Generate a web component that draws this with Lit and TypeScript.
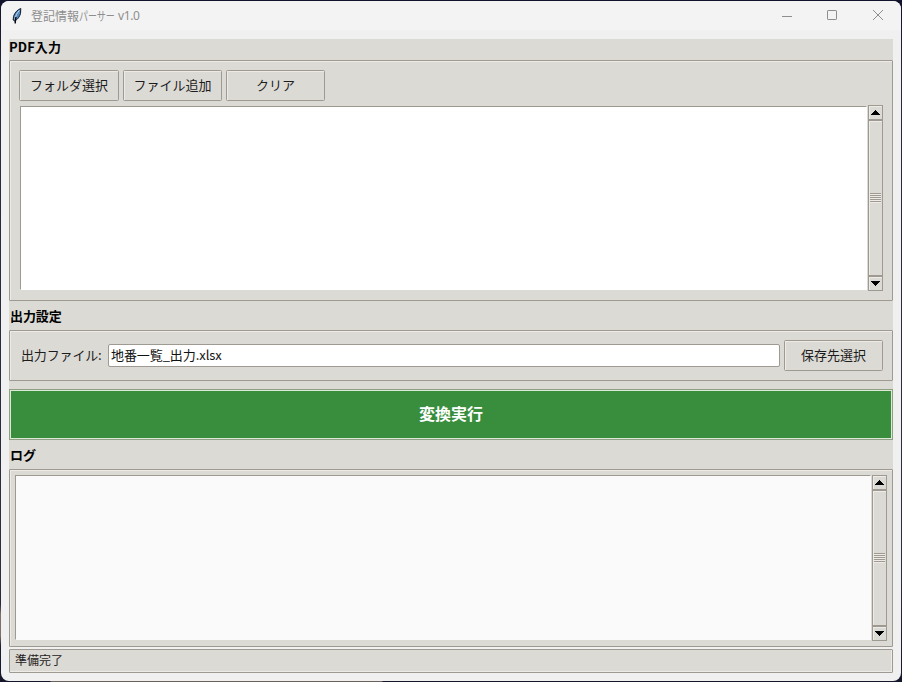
import { LitElement, html, css, svg } from "lit";
import { customElement, property } from "lit/decorators.js";

@customElement("tk-scrollbar")
class TkScrollbar extends LitElement {
  static styles = css`
    :host { display: flex; flex-direction: column; width: 15px; box-sizing: border-box; flex: none; background: #dcdad5; }
    .cell { box-sizing: border-box; border: 1px solid #9e9a91; box-shadow: inset 1px 1px #eeebe7; display: flex; align-items: center; justify-content: center; }
    .arrow { height: 15px; flex: none; }
    .thumb { flex: 1; }
    svg { display: block; }
    .grip { width: 11px; height: 10px; background: repeating-linear-gradient(#9e9a91 0 1px, #eeebe7 1px 2px); }
  `;
  render() {
    return html`
      <div class="cell arrow"><svg width="9" height="5" shape-rendering="crispEdges"><path d="M4 0h1v1h1v1h1v1h1v1h1v1H0v-1h1v-1h1v-1h1v-1h1z"/></svg></div>
      <div class="cell thumb"><div class="grip"></div></div>
      <div class="cell arrow"><svg width="9" height="5" shape-rendering="crispEdges"><path d="M0 0h9v1h-1v1h-1v1h-1v1h-1v1h-1v-1h-1v-1h-1v-1h-1v-1h-1z"/></svg></div>`;
  }
}

@customElement("tk-button")
class TkButton extends LitElement {
  @property() label = "";
  static styles = css`
    :host { display: block; flex: none; }
    .btn { height: 100%; width: 100%; box-sizing: border-box; border: 1px solid #9e9a91; border-radius: 1.5px; box-shadow: inset 1px 1px #eeebe7;
      background: #dcdad5; color: #1c1c1c; font: inherit; padding: 0 0 2px; display: flex; align-items: center; justify-content: center; }
    .text { display: block; line-height: 16px; }
  `;
  render() {
    return html`<button class="btn"><span class="text">${this.label}</span></button>`;
  }
}

@customElement("app-root")
class AppRoot extends LitElement {
  static styles = css`
    :host { display: block; width: 902px; height: 682px; box-sizing: border-box; padding: 1px; overflow: hidden;
      background: linear-gradient(90deg, transparent 0 50px, #6b625d 51px 382px, transparent 383px) 0 681px / 100% 1px no-repeat,
        linear-gradient(transparent, #806f6b 10px 32px, transparent) 0 604px / 1px 42px no-repeat,
        linear-gradient(#11122b 0, #292a3d 12%, #2b2d40 85%, #15162a 100%);
      font: 13px/16px "Noto Sans CJK JP", "Noto Sans", sans-serif; color: #1c1c1c; }
    .window { width: 900px; height: 680px; box-sizing: border-box; border-radius: 8px; background: #f0f0f0; overflow: hidden; display: flex; flex-direction: column; }
    .titlebar { height: 29px; flex: none; background: #f3f3f3; display: flex; align-items: center; padding-left: 10px; color: #8e8e8e; }
    .feather { flex: none; width: 12px; height: 18px; }
    .title { margin-left: 8px; font-size: 12px; white-space: nowrap; display: flex; flex: 1; }
    .kana { display: block; width: 48px; margin-right: -12px; transform: scaleX(0.75); transform-origin: left; }
    .ver { margin-left: 3px; font-family: "Noto Sans", sans-serif; letter-spacing: -0.4px; }
    .controls { display: flex; height: 100%; flex: none; }
    .control { width: 46px; display: flex; align-items: center; justify-content: center; }
    .client { margin: 9px 8px 0; display: flex; flex-direction: column; }
    .body { background: #dcdad5; display: flex; flex-direction: column; }
    .heading { font-weight: 700; color: #000; height: 29px; box-sizing: border-box; padding: 7px 0 0 1px; letter-spacing: -0.1px; }
    .heading.first { height: 21px; padding: 0; letter-spacing: 0.1px; }
    .frame { box-sizing: border-box; border: 1px solid #9e9a91; box-shadow: inset 1px 1px #eeebe7; border-radius: 1px; }
    .input { height: 241px; padding: 9px 9px 8px; display: flex; flex-direction: column; }
    .buttons { display: flex; gap: 4px; height: 31px; }
    .b0 { width: 100px; }
    .b1, .b2 { width: 99px; }
    .list { display: flex; margin-top: 4px; height: 186px; }
    .well { flex: 1; box-sizing: border-box; background: #fff; border: 1px solid #fff; border-top-color: #9e9a91; border-left-color: #9e9a91; margin: 1px 1px 0 1px; height: 184px; }
    .output { height: 51px; padding: 9px; display: flex; align-items: center; }
    .label { width: 87px; margin-left: 2px; padding-bottom: 2px; white-space: nowrap; letter-spacing: -0.15px; }
    .entry { flex: 1; height: 23px; margin-right: 4px; box-sizing: border-box; border: 1px solid #9e9a91; border-radius: 2px; background: #fff; color: #111; padding: 0 3px 2px 2px; font: inherit; line-height: 16px; outline: none; min-width: 0; letter-spacing: -0.08px; }
    .save { width: 99px; height: 31px; }
    .run { height: 51px; margin-top: 8px; box-sizing: border-box; border: 1px solid #8da083; box-shadow: inset 0 0 0 1px #dfe8d7; background: #388e3c; color: #fff; font: 700 16px/20px "Noto Sans CJK JP", sans-serif; padding: 0 0 3px; }
    .log { height: 178px; padding: 5px; display: flex; }
    .log .well { background: #fafafa; border-color: #9e9a91 #fafafa #fafafa #9e9a91; height: 165px; margin: 0 1px 0 0; }
    .log tk-scrollbar { height: 166px; }
    .status { margin-top: 2px; height: 24px; padding: 2px 5px; background: #dcdad5; font-size: 12px; box-shadow: inset -1px -1px #eeebe7; }
  `;

  render() {
    return html`
      <div class="window">
        <div class="titlebar">
          ${this.feather()}
          <div class="title"><span>登記情報</span><span class="kana">パーサー</span><span class="ver">v1.0</span></div>
          <div class="controls">
            <div class="control"><svg width="12" height="12"><path d="M2 6.500h10" stroke="#8e8e8e"/></svg></div>
            <div class="control"><svg width="12" height="12"><rect x="1.5" y="0.5" width="9" height="9" rx="0.6" fill="none" stroke="#8e8e8e"/></svg></div>
            <div class="control"><svg width="12" height="12"><path d="M1 0l10 10M11 0L1 10" stroke="#8e8e8e"/></svg></div>
          </div>
        </div>
        <div class="client">
          <div class="body">
            <div class="heading first">PDF入力</div>
            <div class="frame input">
              <div class="buttons">
                ${["フォルダ選択", "ファイル追加", "クリア"].map((t, i) => html`<tk-button class="b${i}" .label=${t}></tk-button>`)}
              </div>
              <div class="list"><div class="well"></div><tk-scrollbar></tk-scrollbar></div>
            </div>
            <div class="heading">出力設定</div>
            <div class="frame output">
              <span class="label">出力ファイル:</span>
              <input class="entry" .value=${"地番一覧_出力.xlsx"} />
              <tk-button class="save" .label=${"保存先選択"}></tk-button>
            </div>
            <button class="run">変換実行</button>
            <div class="heading">ログ</div>
            <div class="frame log"><div class="well"></div><tk-scrollbar></tk-scrollbar></div>
          </div>
          <div class="frame status">準備完了</div>
        </div>
      </div>`;
  }

  private feather() {
    return html`<svg class="feather" viewBox="0 0 12 18">${svg`
      <path d="M9.800 1.500C6.500 2.500 3.500 6 2.500 9.500L2.200 13l1.500 1c3-1.500 5-4.500 5.800-7.500z" fill="#5388bd" stroke="#101a28"/>
      <path d="M8.300 3.500C6 6 4.500 9 3.800 12.500" stroke="#c5ddf2" fill="none"/>
      <path d="M5 10C4.500 12 4.200 14 4.200 16.500" stroke="#070a10" stroke-width="1.400" fill="none"/>`}</svg>`;
  }
}
